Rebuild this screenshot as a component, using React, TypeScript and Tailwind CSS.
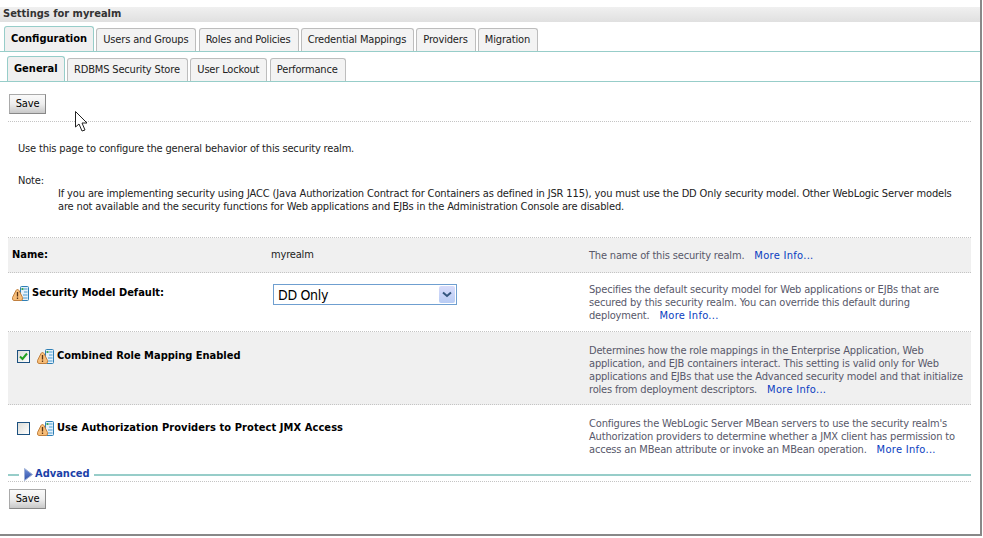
import React from "react";

const font = "font-['DejaVu_Sans',sans-serif] [font-stretch:condensed] tracking-[-0.17px]";

const TabBar = ({ tabs, sub }: { tabs: string[]; sub?: boolean }) => (
  <div className={`mt-[5px] flex h-[25px] items-end border-b-[1px] border-[#97cdc9] pr-[3px] ${sub ? "gap-[2.5px] pl-[7px]" : "gap-[2.2px] pl-[4px]"}`}>
    {tabs.map((t, i) => (
      <div
        key={t}
        className={`flex items-center rounded-t-[3px] border border-b-0 pl-[6px] text-[11px] ${
          i === 0
            ? "h-[25px] border-[#97cdc9] bg-[#f0f0f0] pr-[6px] font-bold tracking-normal text-black"
            : "h-[23px] border-[#bdbdbd] bg-[#f3f3f3] pr-[7px] text-[#222]"
        }`}
      >
        {t}
      </div>
    ))}
  </div>
);

const SaveButton = () => (
  <button className="h-[20px] w-[37px] border border-[#aaa] border-r-[#888] border-b-[#888] bg-gradient-to-b from-[#fafafa] via-[#eeeeee] to-[#c8c8c8] text-[11px] text-black">
    Save
  </button>
);

const WarnIcon = () => (
  <svg width="17" height="15" viewBox="0 0 17 15" className="shrink-0">
    <rect x="8.5" y="0.5" width="8" height="14" rx="1" fill="#e4f0fa" stroke="#2f7fb5" />
    <path d="M12 3h3.5M12 6h3.5M11 9h4.5M11 12h4.5" stroke="#4a9bd0" strokeWidth="1" />
    <rect x="9.5" y="2" width="2" height="2" fill="#3aa655" />
    <path d="M5.5 3.5 Q6.5 3.5 7 4.5 L10.5 11.5 Q11 14.5 9 14.5 L2 14.5 Q0 14.5 0.5 11.5 L4 4.5 Q4.5 3.5 5.5 3.5 Z" fill="#f7bd78" stroke="#c0803f" />
    <path d="M5.5 6v4.5M5.5 11.5v1.5" stroke="#5a3414" strokeWidth="1.3" />
  </svg>
);

const Box = ({ checked }: { checked?: boolean }) => (
  <div className="flex h-[13px] w-[13px] shrink-0 items-center justify-center border border-[#1c5180] bg-gradient-to-br from-[#dcdcd7] to-white">
    {checked && (
      <svg width="9" height="9" viewBox="0 0 9 9">
        <path d="M1 4.5 L3.5 7 L8 1.5" fill="none" stroke="#21a121" strokeWidth="2" />
      </svg>
    )}
  </div>
);

const More = () => <span className="ml-[7px] tracking-[0.3px] text-[#0a3cc0]">More Info...</span>;

const Row = ({
  height,
  shaded,
  label,
  value,
  children,
}: {
  height: string;
  shaded?: boolean;
  label: React.ReactNode;
  value?: React.ReactNode;
  children: React.ReactNode;
}) => (
  <div className={`flex ${height} border-b border-dotted border-[#c4c4c4] ${shaded ? "bg-[#f0f0f0]" : ""}`}>
    <div className="w-[263px] shrink-0">{label}</div>
    <div className="w-[318px] shrink-0">{value}</div>
    <div className="min-w-0 flex-1 pr-[3px] text-[11px] leading-[13px] text-[#58586a]">{children}</div>
  </div>
);

export default function App() {
  return (
    <div className={`relative h-[538px] w-[983px] overflow-hidden bg-white ${font}`}>
      <div className="h-[536px] w-[982px] border-r-2 border-b-2 border-[#888]">
        <div className="pt-[7px]">
          <div className="flex h-[15px] items-center bg-gradient-to-b from-[#f0f0f0] to-[#e0e0e0] pl-[3px] text-[11px] font-bold tracking-normal text-[#333]">
            Settings for myrealm
          </div>
          <TabBar tabs={["Configuration", "Users and Groups", "Roles and Policies", "Credential Mappings", "Providers", "Migration"]} />
          <TabBar sub tabs={["General", "RDBMS Security Store", "User Lockout", "Performance"]} />
        </div>

        <div className="flex pl-[9px] pt-[12px]">
          <SaveButton />
        </div>
        <div className="mt-[7px] ml-[8px] mr-[9px] border-b border-dotted border-[#c4c4c4]" />

        <p className="mt-[20px] ml-[18px] text-[11px] leading-[13px] text-[#222]">
          Use this page to configure the general behavior of this security realm.
        </p>
        <p className="mt-[19px] ml-[18px] text-[11px] leading-[13px] text-[#222]">Note:</p>
        <p className="ml-[58px] mr-[24px] text-[11px] leading-[13px] tracking-[-0.14px] text-[#222]">
          If you are implementing security using JACC (Java Authorization Contract for Containers as defined in JSR 115), you must use the DD Only security model. Other WebLogic Server models are not available and the security functions for Web applications and EJBs in the Administration Console are disabled.
        </p>

        <div className="mt-[24px] ml-[8px] mr-[9px] border-t border-dotted border-[#c4c4c4]">
          <Row
            height="h-[35px] items-center"
            shaded
            label={<span className="block pl-[4px] text-[11px] font-bold tracking-normal text-black">Name:</span>}
            value={<span className="block text-[11px] text-[#222]">myrealm</span>}
          >
            The name of this security realm. <More />
          </Row>
          <Row
            height="h-[59px] pt-[10px]"
            label={
              <div className="mt-[2px] flex items-center gap-[3px] pl-[4px] text-[11px] font-bold tracking-normal text-black">
                <WarnIcon /> Security Model Default:
              </div>
            }
            value={
              <div className="mt-[1px] ml-[2px] flex h-[21px] w-[184px] items-center justify-between border border-[#6f9fd0] pl-[4px] pr-[1px] text-[14px] tracking-[-0.3px] text-black">
                <span className="pt-[1px]">DD Only</span>
                <div className="flex h-[17px] w-[16px] items-center justify-center rounded-[2px] bg-gradient-to-b from-[#d8dcfb] to-[#b8ccf4]">
                  <svg width="10" height="7" viewBox="0 0 10 7">
                    <path d="M1 1.5 L5 5 L9 1.5" fill="none" stroke="#34567f" strokeWidth="2" />
                  </svg>
                </div>
              </div>
            }
          >
            Specifies the default security model for Web applications or EJBs that are secured by this security realm. You can override this default during deployment. <More />
          </Row>
          <Row
            height="h-[73px] pt-[12px]"
            shaded
            label={
              <div className="mt-[4px] flex items-center pl-[9px] text-[11px] font-bold tracking-normal text-black">
                <Box checked />
                <div className="ml-[7px] mr-[3px]"><WarnIcon /></div> Combined Role Mapping Enabled
              </div>
            }
          >
            Determines how the role mappings in the Enterprise Application, Web application, and EJB containers interact. This setting is valid only for Web applications and EJBs that use the Advanced security model and that initialize roles from deployment descriptors. <More />
          </Row>
          <div className="flex h-[56px] pt-[12px]">
            <div className="w-[581px] shrink-0">
              <div className="flex items-center pl-[9px] pt-[3px] text-[11px] font-bold tracking-[0.08px] text-black">
                <Box />
                <div className="ml-[7px] mr-[3px]"><WarnIcon /></div> Use Authorization Providers to Protect JMX Access
              </div>
            </div>
            <div className="min-w-0 flex-1 pr-[3px] text-[11px] leading-[13px] text-[#58586a]">
              Configures the WebLogic Server MBean servers to use the security realm's Authorization providers to determine whether a JMX client has permission to access an MBean attribute or invoke an MBean operation. <More />
            </div>
          </div>
        </div>

        <div className="mt-[7px] ml-[8px] mr-[9px] flex h-[13px] items-center">
          <div className="h-[2px] w-[11px] bg-[#97cdc9]" />
          <svg width="12" height="13" viewBox="0 0 12 13" className="ml-[3px]">
            <defs>
              <linearGradient id="adv" x1="0" y1="0" x2="0" y2="1">
                <stop offset="0" stopColor="#6f8fd8" />
                <stop offset="1" stopColor="#2f4fa8" />
              </linearGradient>
            </defs>
            <path d="M2.5 0.5 L10.5 6.5 L2.5 12.5 Z" fill="url(#adv)" stroke="#9fb0d6" />
          </svg>
          <span className="ml-[1px] text-[11px] font-bold tracking-normal text-[#1c3fa8]">Advanced</span>
          <div className="ml-[4px] h-[2px] flex-1 bg-[#97cdc9]" />
        </div>
        <div className="ml-[8px] mr-[9px] border-b border-dotted border-[#c4c4c4]" />
        <div className="flex pl-[9px] pt-[7px]">
          <SaveButton />
        </div>
      </div>

      {/* mouse pointer over the page */}
      <svg width="14" height="22" viewBox="0 0 14 22" className="absolute left-[75px] top-[111px]">
        <path d="M0.5 0.5 L0.5 16 L4 13 L7 20 L10 19 L7 12 L12 12 Z" fill="white" stroke="#222" />
      </svg>
    </div>
  );
}
